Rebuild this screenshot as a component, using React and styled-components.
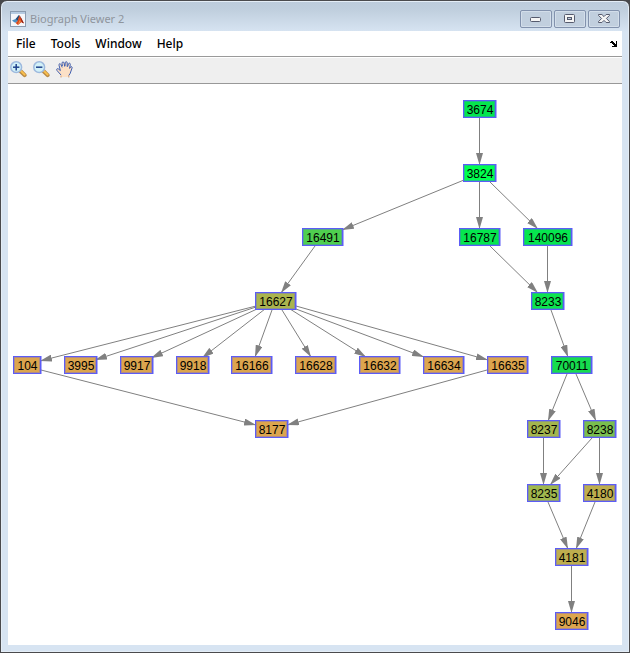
import React from "react";
import styled, { createGlobalStyle } from "styled-components";

const GlobalStyle = createGlobalStyle`
  *, *::before, *::after { box-sizing: border-box; }
  body { margin: 0; background: #47484b; }
  button { font: inherit; color: inherit; padding: 0; margin: 0; border: 0; background: none; }
`;

const Frame = styled.div`
  display: flex;
  flex-direction: column;
  min-height: 100vh;
  padding: 0 7px 7px;
  border: 1px solid #4a4a4d;
  border-radius: 7px 7px 0 0;
  background: linear-gradient(#bccbdb, #bfcedd 8px, #d7e4f2 31px);
  box-shadow: inset 0 0 0 1px #e4edf6;
  font-family: "Noto Sans", "Open Sans", sans-serif;
  font-size: 12px;
`;

const TitleBar = styled.header`
  display: flex;
  align-items: center;
  gap: 4px;
  height: 30px;
  padding: 6px 2px 0;
`;

const Title = styled.h1`
  flex: 1;
  margin: 0;
  font-size: 11px;
  font-weight: 400;
  line-height: 16px;
  color: #8f959d;
`;

const WindowControls = styled.div`
  display: flex;
  gap: 2px;
`;

const WindowButton = styled.button`
  display: grid;
  place-items: center;
  width: 32px;
  height: 18px;
  border: 1px solid #8292ad;
  border-radius: 2px;
  box-shadow: inset 0 0 0 1px #d3deea;
  background: #c1cfde;
`;

const Content = styled.main`
  flex: 1;
  display: flex;
  flex-direction: column;
  background: #fff;
`;

const MenuBar = styled.nav`
  display: flex;
  align-items: center;
  gap: 15px;
  height: 26px;
  padding: 0 4px 0 8px;
  border-bottom: 1px solid #9a9a9a;
`;

const MenuItem = styled.button`
  line-height: 16px;
  color: #000;
  font-weight: 500;
`;

const DockButton = styled.button`
  display: flex;
  margin-left: auto;
`;

const Toolbar = styled.div`
  display: flex;
  gap: 6px;
  height: 27px;
  padding: 3px 2px 0;
  border-top: 1px solid #fff;
  border-bottom: 1px solid #989898;
  background: #efefef;
`;

const ToolButton = styled.button`
  display: flex;
  width: 17px;
  height: 18px;
`;

const Canvas = styled.section`
  flex: 1;
  position: relative;
  min-height: 561px;
  overflow: hidden;
`;

const EdgeLayer = styled.svg`
  position: absolute;
  inset: 0;
  width: 100%;
  height: 100%;
`;

const NODE_WIDTHS = { 3: 28, 4: 33, 5: 41, 6: 49 };

const Node = styled.div`
  position: absolute;
  left: ${(p) => p.$x}px;
  top: ${(p) => 16 + p.$rank * 64}px;
  width: ${(p) => NODE_WIDTHS[p.$digits]}px;
  height: 18px;
  padding-left: 1px;
  border: 1px solid #5c5cf6;
  box-shadow: inset 0 0 0 1px rgba(92, 92, 246, 0.35), 1px 0 0 rgba(92, 92, 246, 0.5);
  background: ${(p) => p.$color};
  color: #000;
  font: 12px/18px "Liberation Sans", Arial, sans-serif;
  text-align: center;
  white-space: nowrap;
`;

const NODES = [
  ["3674", 455, 0, "#04e64e"],
  ["3824", 455, 1, "#00ff4e"],
  ["16491", 294, 2, "#4fcf4f"],
  ["16787", 451, 2, "#06e64e"],
  ["140096", 515, 2, "#06e64e"],
  ["16627", 247, 3, "#aab44e"],
  ["8233", 523, 3, "#0ce44e"],
  ["104", 5, 4, "#dca54e"],
  ["3995", 56, 4, "#dca54e"],
  ["9917", 112, 4, "#dca54e"],
  ["9918", 168, 4, "#dca54e"],
  ["16166", 223, 4, "#dca54e"],
  ["16628", 287, 4, "#dca54e"],
  ["16632", 351, 4, "#dca54e"],
  ["16634", 415, 4, "#dca54e"],
  ["16635", 479, 4, "#dca54e"],
  ["70011", 543, 4, "#16dc4e"],
  ["8177", 247, 5, "#dca54e"],
  ["8237", 519, 5, "#a4b64e"],
  ["8238", 575, 5, "#7abf4e"],
  ["8235", 519, 6, "#a0b84e"],
  ["4180", 575, 6, "#beae4e"],
  ["4181", 547, 7, "#beae4e"],
  ["9046", 547, 8, "#dca54e"],
];

const EDGES = [
  [471.5, 34, 471.5, 81],
  [456, 96, 334, 146],
  [471.5, 98, 471.5, 145],
  [482, 98, 530, 145],
  [307, 162, 273, 209],
  [482, 162, 530, 209],
  [539.5, 162, 539.5, 209],
  [543, 226, 560, 273],
  [248, 222, 32, 277],
  [248, 223, 87, 276],
  [249, 225, 143, 274],
  [257, 225, 194, 274],
  [264, 226, 247, 273],
  [274, 226, 303, 273],
  [282, 225, 358, 273],
  [288, 225, 416, 273],
  [288, 222, 480, 276],
  [33, 286, 248, 341],
  [479, 286, 279, 341],
  [559, 290, 540, 337],
  [568, 290, 588, 337],
  [535.5, 354, 535.5, 401],
  [584, 354, 542, 401],
  [591.5, 354, 591.5, 401],
  [540, 418, 560, 465],
  [587, 418, 568, 465],
  [563.5, 482, 563.5, 529],
];

const MatlabIcon = () => (
  <svg width="16" height="17" viewBox="0 0 16 17" aria-hidden="true">
    <rect x=".5" y=".5" width="15" height="15" fill="#f4f6fa" stroke="#8a9bb0" />
    <path d="M1 1h14v2H1z" fill="#b5cbe2" />
    <path d="M2 9.6l4-1.8 1.8 2-2 2-1.5-.5z" fill="#4a8fc4" />
    <path d="M5.6 8L8.8 4l.9.8L8 10z" fill="#234a78" />
    <path d="M5.6 12l2-2 1.7-5.5L11 7l2.8 5-2.6-.8L8 14z" fill="#d8471c" />
    <path d="M9.2 5l.9 3.6-1.4 3L7.6 13.4l3-2.6z" fill="#f5a04a" />
    <path d="M9.5 4l2 3.5 2.5 5-1.8-.8z" fill="#8f1f14" />
  </svg>
);

const MinimizeIcon = () => (
  <svg width="12" height="12" viewBox="0 0 12 12" aria-hidden="true">
    <rect x=".5" y="4.5" width="10" height="4" rx="1" fill="#f5f5f5" stroke="#555a6d" />
  </svg>
);

const MaximizeIcon = () => (
  <svg width="12" height="12" viewBox="0 0 12 12" aria-hidden="true">
    <rect x=".5" y="1.5" width="10" height="8" rx="1" fill="#f5f5f5" stroke="#555a6d" />
    <rect x="3.5" y="4.5" width="4" height="2" fill="#c1cfde" stroke="#555a6d" />
  </svg>
);

const CloseIcon = () => (
  <svg width="12" height="12" viewBox="0 0 12 12" aria-hidden="true">
    <path
      d="M.5 1.5h3.4L6 3.6l2.1-2.1h3.4v.9L8.4 5.5l3.1 3.1v.9H8.1L6 7.4 3.9 9.5H.5v-.9l3.1-3.1L.5 2.4z"
      fill="#f5f5f5"
      stroke="#555a6d"
      strokeLinejoin="round"
    />
  </svg>
);

const DockIcon = () => (
  <svg width="8" height="6" viewBox="0 0 8 6" aria-hidden="true">
    <path d="M0 1h1V0h2v1h1v1h1v1h1V0h1v6H2V5h2V4H3V3H2V2H0z" fill="#000" />
  </svg>
);

const ZoomIcon = ({ plus }) => (
  <svg width="17" height="17" viewBox="0 0 17 17" aria-hidden="true">
    <path d="M10.4 10l4.2 4.2" stroke="#b98a45" strokeWidth="4" strokeLinecap="round" />
    <path d="M10.6 9.6l4 4" stroke="#fbc04c" strokeWidth="2" strokeLinecap="round" />
    <circle cx="6.2" cy="6.2" r="5.4" fill="#d2f1f8" stroke="#9db9de" strokeWidth="1.5" />
    <path d="M3 6.2h6.4" stroke="#20428c" strokeWidth="1.5" />
    {plus && <path d="M6.2 3v6.4" stroke="#20428c" strokeWidth="1.5" />}
  </svg>
);

const HandIcon = () => (
  <svg width="17" height="17" viewBox="0 0 17 17" aria-hidden="true">
    <path
      d="M5 16v-2L1 9.5C0 8 1.4 7.2 2.5 8L5 10 3 4.2c-.4-1.6 1.4-2 2-.6L6.6 7 6 2.2c0-1.7 1.9-1.7 2.1 0L9 6.6l.2-4.8c.1-1.5 2-1.5 2 0V7l1.2-4c.5-1.4 2.1-.9 1.9.4L13.6 8l.8-1.8c.7-1.2 2-.5 1.7.7l-2 5.7-1.4 2V16z"
      fill="#fce0c6"
    />
    <path d="M4.5 9h8.5l-.5 4-1 2.5H6L4 12z" fill="#fce0c6" />
    <path
      d="M5 14L1 9.5C0 8 1.4 7.2 2.5 8L4.4 9.6 3 4.2c-.4-1.6 1.4-2 2-.6L6.2 6.4M6.4 5L6 2.2c0-1.7 1.9-1.7 2.1 0L8.7 5.6M9 5l.2-3.2c.1-1.5 2-1.5 2 0V5.8M11.6 5.6l.8-2.6c.5-1.4 2.1-.9 1.9.4L13.6 7.4l.8-1.2c.7-1.2 2-.5 1.7.7l-2 5.7-1.4 2"
      fill="none"
      stroke="#3e5eb0"
    />
    <path d="M5 14.5V16.5M12.8 14.5V16.5" stroke="#d59b6d" />
  </svg>
);

export default function App() {
  return (
    <>
      <GlobalStyle />
      <Frame>
        <TitleBar>
          <MatlabIcon />
          <Title>Biograph Viewer 2</Title>
          <WindowControls>
            <WindowButton aria-label="Minimize"><MinimizeIcon /></WindowButton>
            <WindowButton aria-label="Maximize"><MaximizeIcon /></WindowButton>
            <WindowButton aria-label="Close"><CloseIcon /></WindowButton>
          </WindowControls>
        </TitleBar>
        <Content>
          <MenuBar>
            {["File", "Tools", "Window", "Help"].map((label) => (
              <MenuItem key={label}>{label}</MenuItem>
            ))}
            <DockButton aria-label="Dock window"><DockIcon /></DockButton>
          </MenuBar>
          <Toolbar>
            <ToolButton aria-label="Zoom in"><ZoomIcon plus /></ToolButton>
            <ToolButton aria-label="Zoom out"><ZoomIcon /></ToolButton>
            <ToolButton aria-label="Pan"><HandIcon /></ToolButton>
          </Toolbar>
          <Canvas aria-label="Graph">
            <EdgeLayer aria-hidden="true">
              <defs>
                <marker id="arrow" markerUnits="userSpaceOnUse" markerWidth="12" markerHeight="7" refX="12" refY="3.5" orient="auto">
                  <path d="M0 0L12 3.5 0 7z" fill="#808080" />
                </marker>
              </defs>
              {EDGES.map(([x1, y1, x2, y2], i) => (
                <line key={i} x1={x1} y1={y1} x2={x2} y2={y2} stroke="#808080" markerEnd="url(#arrow)" />
              ))}
            </EdgeLayer>
            {NODES.map(([id, x, rank, color]) => (
              <Node key={id} $x={x} $rank={rank} $color={color} $digits={id.length}>{id}</Node>
            ))}
          </Canvas>
        </Content>
      </Frame>
    </>
  );
}
